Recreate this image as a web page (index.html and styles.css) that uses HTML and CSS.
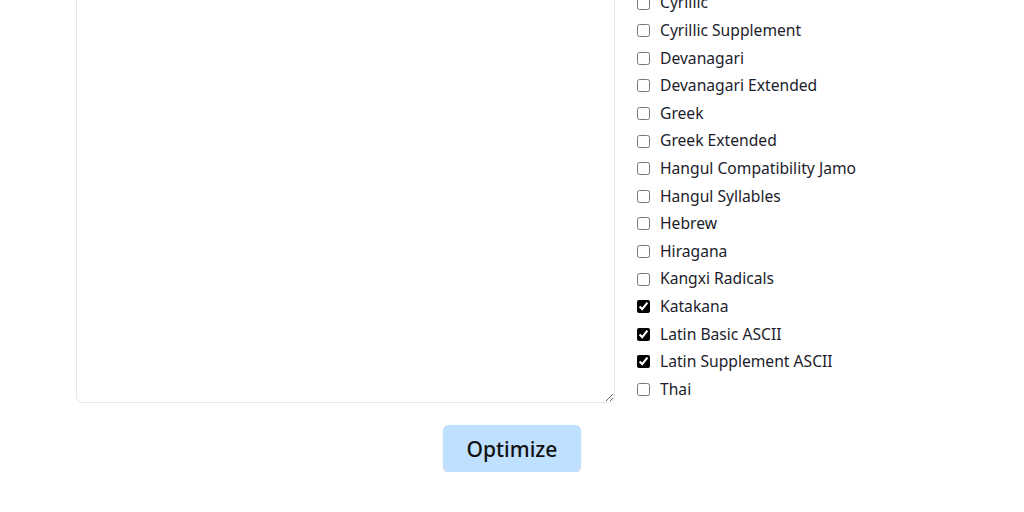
FILE: index.html
```html
<!DOCTYPE html>
<html lang="en">
<head>
<meta charset="utf-8">
<title>Font Optimizer</title>
<link rel="stylesheet" href="styles.css">
</head>
<body>
<main class="page">
  <section class="workspace">
    <textarea class="source" aria-label="Text to keep"></textarea>
    <div class="ranges">
      <label class="range"><input type="checkbox"> Arabic</label>
      <label class="range"><input type="checkbox"> Armenian</label>
      <label class="range"><input type="checkbox"> Bengali</label>
      <label class="range"><input type="checkbox"> CJK Unified Ideographs</label>
      <label class="range"><input type="checkbox"> Cyrillic</label>
      <label class="range"><input type="checkbox"> Cyrillic Supplement</label>
      <label class="range"><input type="checkbox"> Devanagari</label>
      <label class="range"><input type="checkbox"> Devanagari Extended</label>
      <label class="range"><input type="checkbox"> Greek</label>
      <label class="range"><input type="checkbox"> Greek Extended</label>
      <label class="range"><input type="checkbox"> Hangul Compatibility Jamo</label>
      <label class="range"><input type="checkbox"> Hangul Syllables</label>
      <label class="range"><input type="checkbox"> Hebrew</label>
      <label class="range"><input type="checkbox"> Hiragana</label>
      <label class="range"><input type="checkbox"> Kangxi Radicals</label>
      <label class="range"><input type="checkbox" checked> Katakana</label>
      <label class="range"><input type="checkbox" checked> Latin Basic ASCII</label>
      <label class="range"><input type="checkbox" checked> Latin Supplement ASCII</label>
      <label class="range"><input type="checkbox"> Thai</label>
    </div>
  </section>
  <div class="actions">
    <button class="optimize" type="button">Optimize</button>
  </div>
</main>
</body>
</html>
```

FILE: styles.css
```css
html, body {
  margin: 0;
  padding: 0;
  background: #ffffff;
}

body {
  font-family: "Noto Sans", "Open Sans", sans-serif;
  color: #1c1d2b;
  overflow: hidden;
}

.page {
  width: 872px;
  margin: -118px auto 0;
}

.workspace {
  display: grid;
  grid-template-columns: 539px 1fr;
  column-gap: 18px;
  align-items: stretch;
}

.source {
  display: block;
  box-sizing: border-box;
  width: 100%;
  height: 100%;
  border: 1px solid #e6e6e6;
  border-radius: 6px;
  padding: 8px;
  font: inherit;
  resize: vertical;
  outline: none;
}

.ranges {
  display: flex;
  flex-direction: column;
  gap: 6px;
  padding-bottom: 3px;
}

.range {
  display: flex;
  align-items: center;
  font-size: 15.65px;
  line-height: 21.6px;
}

.range input {
  width: 13px;
  height: 13px;
  margin: 0 10px 0 4px;
  accent-color: #000000;
}

.actions {
  display: flex;
  justify-content: center;
  padding-top: 22px;
}

.optimize {
  width: 138px;
  height: 47px;
  border: none;
  border-radius: 6px;
  background: #c0e0ff;
  box-shadow: 0 1px 2px rgba(0, 0, 0, 0.12);
  font-family: "Noto Sans", "Open Sans", sans-serif;
  font-size: 21px;
  font-weight: 500;
  color: #111111;
  cursor: pointer;
}
```
